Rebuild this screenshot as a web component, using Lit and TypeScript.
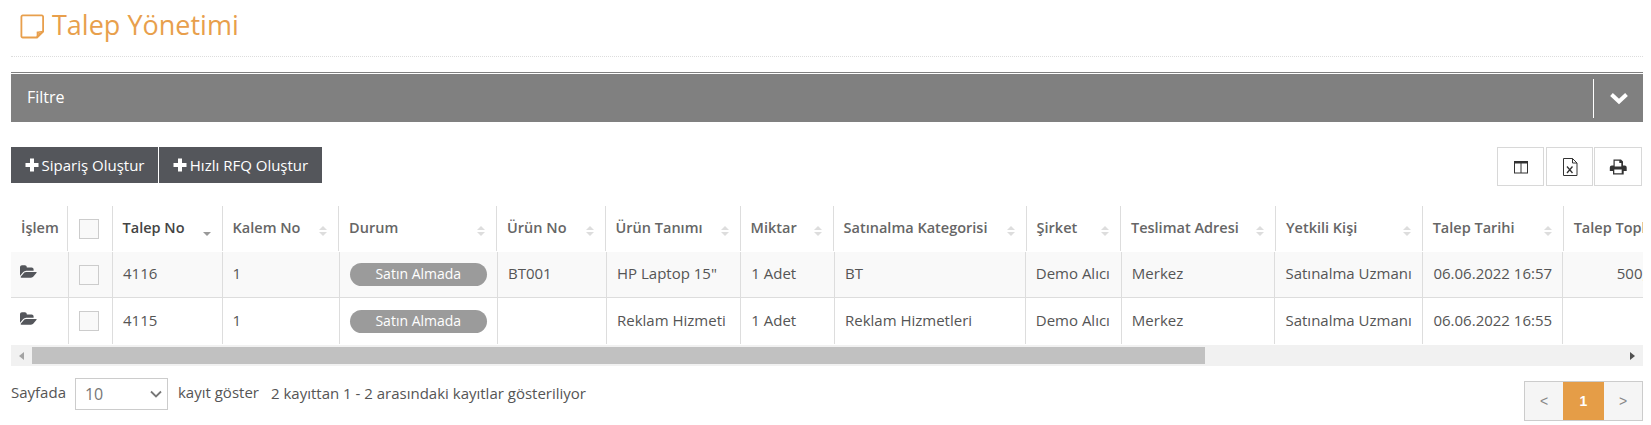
import { LitElement, html, css, svg } from "lit";
import { customElement } from "lit/decorators.js";

const headW = [57.4, 44.2, 110, 116.5, 158, 108.5, 135, 93, 193, 94.4, 155, 146.7, 141, 160];
const bodyW = [58, 44, 109.6, 117, 158.4, 109, 134.3, 93.7, 190.8, 96.1, 153.6, 148, 140, 111];
const heads = ["İşlem", "", "Talep No", "Kalem No", "Durum", "Ürün No", "Ürün Tanımı", "Miktar", "Satınalma Kategorisi", "Şirket", "Teslimat Adresi", "Yetkili Kişi", "Talep Tarihi", "Talep Toplam"];
const rows = [
  { no: "4116", urun: "BT001", tanim: 'HP Laptop 15"', kat: "BT", tarih: "06.06.2022 16:57", top: "500,00" },
  { no: "4115", urun: "", tanim: "Reklam Hizmeti", kat: "Reklam Hizmetleri", tarih: "06.06.2022 16:55", top: "" },
];

const folder = svg`<path d="M1879 952q0 31-31 66l-336 396q-43 51-120.500 86.500t-143.500 35.500h-1088q-34 0-60.500-13t-26.500-43q0-31 31-66l336-396q43-51 120.500-86.500t143.500-35.500h1088q34 0 60.500 13t26.500 43zm-343-344v160h-832q-94 0-197 47.500t-164 119.500l-337 396-5 6q0-4-.5-12.500t-.5-12.500v-960q0-92 66-158t158-66h320q92 0 158 66t66 158v32h544q92 0 158 66t66 158z"/>`;

@customElement("app-root")
export class AppRoot extends LitElement {
  static styles = css`
    :host { display: block; padding: 0 8px 0 11px; font-family: "Open Sans", sans-serif; font-size: 15px; color: #555; background: #fff; height: 425px; box-sizing: border-box; overflow: hidden; }
    .title { height: 56px; border-bottom: 1px dotted #ddd; display: flex; align-items: flex-start; gap: 7px; padding-left: 9px; }
    .title svg { width: 25px; height: 25px; margin-top: 14px; flex: none; }
    .title h1 { margin: 7px 0 0; font-size: 27px; line-height: 36px; font-weight: 400; color: #e89f4c; }
    .panel { margin-top: 15px; border-top: 1px solid #808080; }
    .panel-bar { margin-top: 1px; height: 48px; background: #808080; display: flex; align-items: center; justify-content: space-between; color: #fff; font-size: 16px; padding-left: 16px; }
    .panel-bar > span:first-child { margin-top: -3px; }
    .panel-tool { height: 39px; border-left: 1px solid #fff; width: 49px; display: flex; align-items: center; justify-content: center; }
    .panel-tool svg { width: 20px; height: 14px; }
    .toolbar { margin-top: 25px; display: flex; justify-content: space-between; align-items: flex-start; padding-right: 1px; }
    .btns { display: flex; gap: 1px; }
    .btn { height: 36px; box-sizing: border-box; background: #54565b; color: #fff; display: flex; align-items: center; justify-content: center; gap: 3px; font-size: 15px; }
    .btn svg { width: 14px; height: 14px; }
    .btn.a { width: 147px; }
    .btn.b { width: 163px; }
    .tools { display: flex; gap: 2px; }
    .tool { width: 47px; height: 39px; box-sizing: border-box; border: 1px solid #d8d8d8; display: flex; align-items: center; justify-content: center; }
    .tool svg { width: 18px; height: 18px; }
    .tool.last { margin-left: -1px; width: 48px; }
    .wrap { margin-top: 20px; overflow: hidden; }
    table { border-collapse: separate; border-spacing: 0; table-layout: fixed; }
    th { height: 45px; padding: 0 10px; box-sizing: border-box; border-right: 1px solid #ddd; text-align: left; font-weight: 600; color: #666; font-size: 14.5px; white-space: nowrap; overflow: hidden; }
    th.sorted { color: #444; }
    .th { display: flex; justify-content: space-between; align-items: center; margin-top: -2px; }
    .sort { flex: none; display: flex; flex-direction: column; gap: 2px; margin-right: 1px; margin-top: 6px; }
    .up { width: 0; height: 0; border: 4px solid transparent; border-top: 0; border-bottom: 4px solid #ddd; }
    .dn { width: 0; height: 0; border: 4px solid transparent; border-bottom: 0; border-top: 4px solid #ddd; }
    .sort.on .up { visibility: hidden; }
    .sort.on .dn { border-top-color: #999; }
    .bodyt { margin-top: 1px; }
    td { height: 46px; padding: 0 10px 3px 10px; box-sizing: border-box; border-right: 1px solid #ddd; border-bottom: 1px solid #ddd; white-space: nowrap; overflow: hidden; color: #555; }
    td.nb { padding-bottom: 0; }
    tr:last-child td { border-bottom: 0; height: 46px; }
    tr.odd td { background: #f9f9f9; }
    td.r { text-align: right; }
    td.ic svg { width: 17px; height: 16px; fill: #54565b; display: block; margin: -2px 0 0 -1px; }
    .ck { display: block; width: 20px; height: 20px; box-sizing: border-box; border: 1px solid #ccc; background: #f9f9f9; }
    th .ck { margin-left: 1px; }
    .pill { display: block; height: 23px; line-height: 22px; border-radius: 12px; background: #9b9b9b; color: #fff; font-size: 14px; text-align: center; }
    .scroll { margin-top: 1px; height: 21px; box-sizing: border-box; background: #f1f1f1; padding: 2px 0; display: flex; justify-content: flex-start; }
    .arrow { width: 21px; display: flex; align-items: center; justify-content: center; flex: none; }
    .arrow.end { margin-left: auto; }
    .tl { width: 0; height: 0; border: 4px solid transparent; border-left: 0; border-right: 5px solid #a3a3a3; }
    .tr { width: 0; height: 0; border: 4px solid transparent; border-right: 0; border-left: 5px solid #505050; }
    .thumb { width: 1173px; background: #c1c1c1; flex: none; }
    .foot { margin-top: 12px; display: flex; align-items: flex-start; }
    .foot .t { line-height: 32px; margin-top: -2px; }
    .sel { margin: 0 10px 0 9px; width: 93px; height: 32px; box-sizing: border-box; border: 1px solid #ccc; display: flex; align-items: center; justify-content: space-between; padding: 0 5px 0 9px; font-size: 16px; color: #777; }
    .sel svg { width: 12px; height: 8px; }
    .info { margin: -1px 0 0 12px; line-height: 32px; }
    .pg { margin-left: auto; margin-top: 3px; display: flex; height: 40px; box-sizing: border-box; border: 1px solid #ccc; background: #f5f5f5; color: #888; font-family: "Liberation Sans", sans-serif; font-size: 14px; }
    .pg span { display: flex; align-items: center; justify-content: center; width: 38px; }
    .pg .on { background: #e59d47; color: #fff; width: 41px; font-weight: 700; }
  `;

  private sort(on = false) {
    return html`<span class="sort ${on ? "on" : ""}"><i class="up"></i><i class="dn"></i></span>`;
  }

  render() {
    return html`
      <div class="title">
        <svg viewBox="0 0 25 25" fill="none" stroke="#e89f4c" stroke-width="1.800"><path d="M17 23.500H2.700a1.300 1.300 0 0 1-1.300-1.300V2.700a1.300 1.300 0 0 1 1.300-1.300h19.100a1.300 1.300 0 0 1 1.300 1.300V17.500z"/><path d="M17 23.500c.6-1.500.6-3 .4-5.200 2-.3 3.800-.3 5.700-.8" stroke-width="1.500"/><path d="M18.200 22l4-3.500-4 .5z" fill="#e89f4c" stroke="none"/></svg>
        <h1>Talep Yönetimi</h1>
      </div>
      <div class="panel">
        <div class="panel-bar">
          <span>Filtre</span>
          <span class="panel-tool"><svg viewBox="0 0 20 14"><path d="M2.500 3.500 10 10.500l7.500-7" fill="none" stroke="#fff" stroke-width="4"/></svg></span>
        </div>
      </div>
      <div class="toolbar">
        <div class="btns">
          <div class="btn a"><svg viewBox="0 0 14 14"><path fill="#fff" d="M5 .5h4v4.500h4.500v4H9v4.500H5V9H.5V5H5z"/></svg>Sipariş Oluştur</div>
          <div class="btn b"><svg viewBox="0 0 14 14"><path fill="#fff" d="M5 .5h4v4.500h4.500v4H9v4.500H5V9H.5V5H5z"/></svg>Hızlı RFQ Oluştur</div>
        </div>
        <div class="tools">
          <div class="tool"><svg viewBox="0 0 18 18" fill="none" stroke="#333"><rect x="2.500" y="3.500" width="13" height="11.500"/><path d="M2.500 4.500h13" stroke-width="2"/><path d="M9 4v11"/></svg></div>
          <div class="tool"><svg viewBox="0 0 18 18" fill="none" stroke="#333"><path d="M2.500.5h9l4.500 4.500v12.500H2.500zM11.500.5V5H16"/><path d="M6 8.500l5.500 6.500M11.500 8.500L6 15" stroke-width="1.300"/></svg></div>
          <div class="tool last"><svg viewBox="0 0 18 18"><path fill="#333" d="M4.500 1.500h7.500l2 2v4h1.700a2 2 0 0 1 2 2V13h-3v3.500H4V13H.8V9.500a2 2 0 0 1 2-2h1.700zM5.700 2.700v5.800h6.600V5h-2V2.700zM5.300 11.500v3.800h7.400v-3.800z"/></svg></div>
        </div>
      </div>
      <div class="wrap">
        <table style="width:${headW.reduce((a, b) => a + b, 0)}px">
          <colgroup>${headW.map((w) => html`<col style="width:${w}px" />`)}</colgroup>
          <tr>
            ${heads.map((h, i) =>
              i === 1
                ? html`<th><span class="ck"></span></th>`
                : html`<th class="${i === 2 ? "sorted" : ""}"><div class="th"><span>${h}</span>${i === 0 ? "" : this.sort(i === 2)}</div></th>`
            )}
          </tr>
        </table>
        <table class="bodyt" style="width:${bodyW.reduce((a, b) => a + b, 0)}px">
          <colgroup>${bodyW.map((w) => html`<col style="width:${w}px" />`)}</colgroup>
          ${rows.map(
            (r, i) => html`<tr class="${i === 0 ? "odd" : ""}">
              <td class="ic"><svg viewBox="0 0 1920 1792">${folder}</svg></td>
              <td class="nb"><span class="ck"></span></td>
              <td>${r.no}</td>
              <td>1</td>
              <td class="nb"><span class="pill">Satın Almada</span></td>
              <td>${r.urun}</td>
              <td>${r.tanim}</td>
              <td>1 Adet</td>
              <td>${r.kat}</td>
              <td>Demo Alıcı</td>
              <td>Merkez</td>
              <td>Satınalma Uzmanı</td>
              <td>${r.tarih}</td>
              <td class="r">${r.top}</td>
            </tr>`
          )}
        </table>
      </div>
      <div class="scroll">
        <span class="arrow"><i class="tl"></i></span>
        <span class="thumb"></span>
        <span class="arrow end"><i class="tr"></i></span>
      </div>
      <div class="foot">
        <span class="t">Sayfada</span>
        <span class="sel">10<svg viewBox="0 0 12 8"><path d="M1 1.500l5 5 5-5" fill="none" stroke="#777" stroke-width="1.800"/></svg></span>
        <span class="t">kayıt göster</span>
        <span class="info">2 kayıttan 1 - 2 arasındaki kayıtlar gösteriliyor</span>
        <div class="pg"><span>&lt;</span><span class="on">1</span><span>&gt;</span></div>
      </div>
    `;
  }
}
